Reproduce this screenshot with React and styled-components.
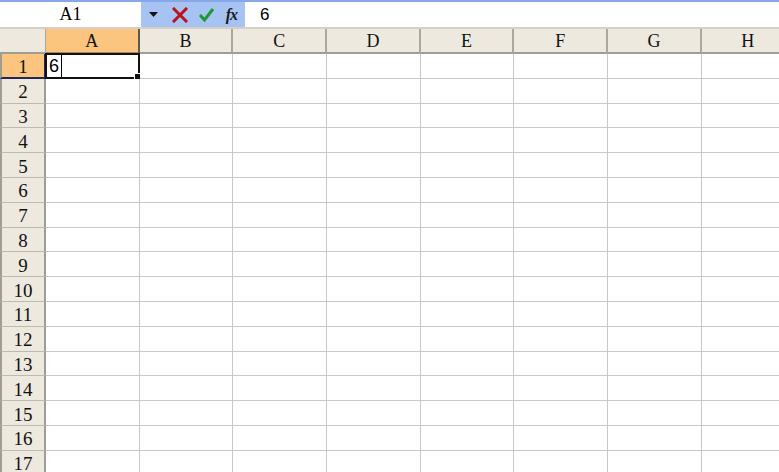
import styled, { createGlobalStyle } from 'styled-components';

const GlobalStyle = createGlobalStyle`
  html, body {
    margin: 0;
    padding: 0;
    background: #ffffff;
    overflow: hidden;
  }
`;

const COLUMNS = ['A', 'B', 'C', 'D', 'E', 'F', 'G', 'H'];
const ROWS = Array.from({ length: 18 }, (_, i) => i + 1);

const Window = styled.div`
  width: 779px;
  height: 472px;
  overflow: hidden;
  background: #ffffff;
`;

const FormulaBar = styled.div`
  display: flex;
  height: 25px;
  border-top: 2px solid #86a8e6;
  border-bottom: 2px solid #d4d0c8;
`;

const NameBox = styled.div`
  width: 141px;
  display: flex;
  align-items: center;
  justify-content: center;
  font-family: 'Liberation Serif', serif;
  font-size: 18px;
  color: #000;
  box-sizing: border-box;
`;

const ButtonStrip = styled.div`
  width: 104px;
  display: flex;
  align-items: center;
  background: #a7c3f3;
  padding-left: 7px;
  box-sizing: border-box;
`;

const IconSlot = styled.div`
  width: ${(p) => p.$w}px;
  margin-left: ${(p) => p.$gap || 0}px;
  height: 25px;
  display: flex;
  align-items: center;
  justify-content: center;
`;

const Fx = styled.span`
  font-family: 'Liberation Serif', serif;
  font-style: italic;
  font-weight: bold;
  font-size: 16px;
  color: #1a1a1a;
  letter-spacing: -1px;
`;

const FormulaInput = styled.div`
  flex: 1;
  display: flex;
  align-items: center;
  padding-left: 15px;
  font-family: 'Liberation Sans', Arial, sans-serif;
  font-size: 17px;
  color: #000;
`;

const Sheet = styled.div`
  display: grid;
  grid-template-columns: 46px repeat(8, 93.7px);
  grid-template-rows: 25px;
  grid-auto-rows: 24.8px;
`;

const Corner = styled.div`
  background: #ede9df;
  border-right: 1px solid #a9a69a;
  border-bottom: 2px solid #a09d92;
  box-sizing: border-box;
`;

const ColHeader = styled.div`
  background: ${(p) => (p.$active ? '#fbc57f' : '#ede9df')};
  border-right: 2px solid ${(p) => (p.$active ? '#5d5a52' : '#aaa79c')};
  border-bottom: 2px solid ${(p) => (p.$active ? '#a8875c' : '#a09d92')};
  box-sizing: border-box;
  display: flex;
  align-items: center;
  justify-content: center;
  font-family: 'Liberation Serif', serif;
  font-size: 18px;
  color: #111;
  padding-top: 2px;
`;

const RowHeader = styled.div`
  background: ${(p) => (p.$active ? '#fbc57f' : '#ede9df')};
  border-right: 2px solid ${(p) => (p.$active ? '#1f2a5a' : '#a09d92')};
  border-bottom: ${(p) => (p.$active ? '2px solid #1f2a5a' : '1px solid #bdbab0')};
  border-left: 2px solid #a09d92;
  box-sizing: border-box;
  display: flex;
  align-items: center;
  justify-content: center;
  font-family: 'Liberation Serif', serif;
  font-size: 19px;
  color: #111;
  padding-top: 3px;
`;

const Cell = styled.div`
  position: relative;
  border-right: 1px solid #c8c8c8;
  border-bottom: 1px solid #c8c8c8;
  box-sizing: border-box;
  font-family: 'Liberation Sans', Arial, sans-serif;
  font-size: 18px;
  color: #000;
  display: flex;
  align-items: center;
  padding-left: 3px;
  padding-top: 2px;
`;

const Selection = styled.div`
  position: absolute;
  left: -1px;
  top: -1px;
  right: -1px;
  bottom: -1px;
  border: 2px solid #111;
  pointer-events: none;
`;

const FillHandle = styled.div`
  position: absolute;
  right: -3px;
  bottom: -3px;
  width: 5px;
  height: 5px;
  background: #111;
  border: 1px solid #fff;
`;

const Caret = styled.span`
  display: inline-block;
  width: 1px;
  height: 23px;
  background: #000;
  margin-left: 2px;
  margin-top: -2px;
`;

const DropArrow = () => (
  <svg width="9" height="5" viewBox="0 0 9 5">
    <path d="M0 0H9L4.5 5Z" fill="#111" />
  </svg>
);

const CancelIcon = () => (
  <svg width="16" height="16" viewBox="0 0 16 16">
    <path d="M2 2L14 14M14 2L2 14" stroke="#b8151b" strokeWidth="3" strokeLinecap="square" />
  </svg>
);

const ConfirmIcon = () => (
  <svg width="17" height="16" viewBox="0 0 17 16">
    <path d="M2 8L6.5 13L15 2" stroke="#1c9a2e" strokeWidth="3" fill="none" strokeLinejoin="miter" />
  </svg>
);

export default function App() {
  return (
    <Window>
      <GlobalStyle />
      <FormulaBar>
        <NameBox>A1</NameBox>
        <ButtonStrip>
          <IconSlot $w={12}>
            <DropArrow />
          </IconSlot>
          <IconSlot $w={30} $gap={6}>
            <CancelIcon />
          </IconSlot>
          <IconSlot $w={24}>
            <ConfirmIcon />
          </IconSlot>
          <IconSlot $w={28}>
            <Fx>fx</Fx>
          </IconSlot>
        </ButtonStrip>
        <FormulaInput>6</FormulaInput>
      </FormulaBar>
      <Sheet>
        <Corner />
        {COLUMNS.map((c) => (
          <ColHeader key={c} $active={c === 'A'}>
            {c}
          </ColHeader>
        ))}
        {ROWS.map((r) => [
          <RowHeader key={`h${r}`} $active={r === 1}>
            {r}
          </RowHeader>,
          ...COLUMNS.map((c) => {
            const selected = r === 1 && c === 'A';
            return (
              <Cell key={`${c}${r}`}>
                {selected && (
                  <>
                    6<Caret />
                    <Selection>
                      <FillHandle />
                    </Selection>
                  </>
                )}
              </Cell>
            );
          }),
        ])}
      </Sheet>
    </Window>
  );
}
